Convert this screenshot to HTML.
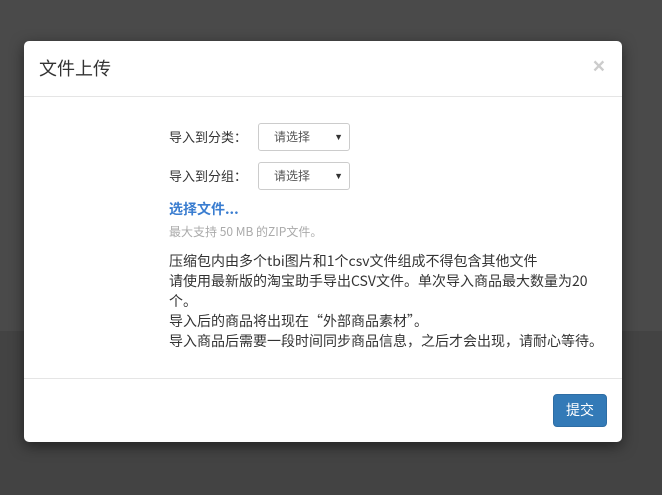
<!DOCTYPE html>
<html><head><meta charset="utf-8"><style>
*{margin:0;padding:0;box-sizing:border-box}
body{width:662px;height:495px;overflow:hidden;background:#434343;font-family:"Liberation Sans","Noto Sans CJK SC",sans-serif;position:relative}
.top{position:absolute;left:0;top:0;width:662px;height:331px;background:#4a4a4a}
.modal{position:absolute;left:24px;top:41px;width:598px;height:401px;background:#fff;border-radius:5px;box-shadow:0 4px 14px rgba(0,0,0,.5)}
.hd{height:56px;border-bottom:1px solid #e5e5e5;position:relative}
.hd h4{position:absolute;left:15px;top:16px;font-size:18px;font-weight:normal;color:#333;line-height:22px;font-family:"Noto Sans CJK SC",sans-serif}
.x{position:absolute;right:17px;top:15px;font-size:21px;color:#ccc;font-weight:bold;line-height:22px}
.bd{position:absolute;left:145px;top:82px;font-size:13px;color:#333;font-family:"Noto Sans CJK SC",sans-serif}
.row{display:flex;align-items:center;height:28px;margin-bottom:11px}
.lab{width:89px;line-height:20px}
.sel{width:92px;height:28px;border:1px solid #ccc;border-radius:3px;position:relative;font-size:12px;line-height:26px;padding-left:15px;color:#555}
.sel span{position:absolute;right:6px;top:0;font-size:9px;color:#333;font-family:"Liberation Sans",sans-serif}
.link{color:#3a7dd0;font-weight:bold;font-size:14px;margin-top:-2px;height:20px;line-height:20px}
.hint{color:#aaa;font-size:12px;margin-top:4px;height:18px;line-height:18px}
.txt{margin-top:10px;line-height:20px;width:440px;font-size:14px}
.ft{position:absolute;left:0;top:337px;width:598px;border-top:1px solid #e5e5e5}
.btn{position:absolute;left:529px;top:353px;width:54px;height:33px;background:#337ab7;border:1px solid #2e6da4;border-radius:4px;color:#fff;font-size:14px;text-align:center;line-height:31px;font-family:"Noto Sans CJK SC",sans-serif}
</style></head><body>
<div class="top"></div>
<div class="modal">
<div class="hd"><h4>文件上传</h4><div class="x">×</div></div>
<div class="bd">
<div class="row"><div class="lab">导入到分类：</div><div class="sel">请选择<span>▼</span></div></div>
<div class="row"><div class="lab">导入到分组：</div><div class="sel">请选择<span>▼</span></div></div>
<div class="link">选择文件...</div>
<div class="hint">最大支持 50 MB 的ZIP文件。</div>
<div class="txt">压缩包内由多个tbi图片和1个csv文件组成不得包含其他文件<br>请使用最新版的淘宝助手导出CSV文件。单次导入商品最大数量为20<br>个。<br>导入后的商品将出现在“外部商品素材”。<br>导入商品后需要一段时间同步商品信息，之后才会出现，请耐心等待。</div>
</div>
<div class="ft"></div>
<div class="btn">提交</div>
</div>
</body></html>
